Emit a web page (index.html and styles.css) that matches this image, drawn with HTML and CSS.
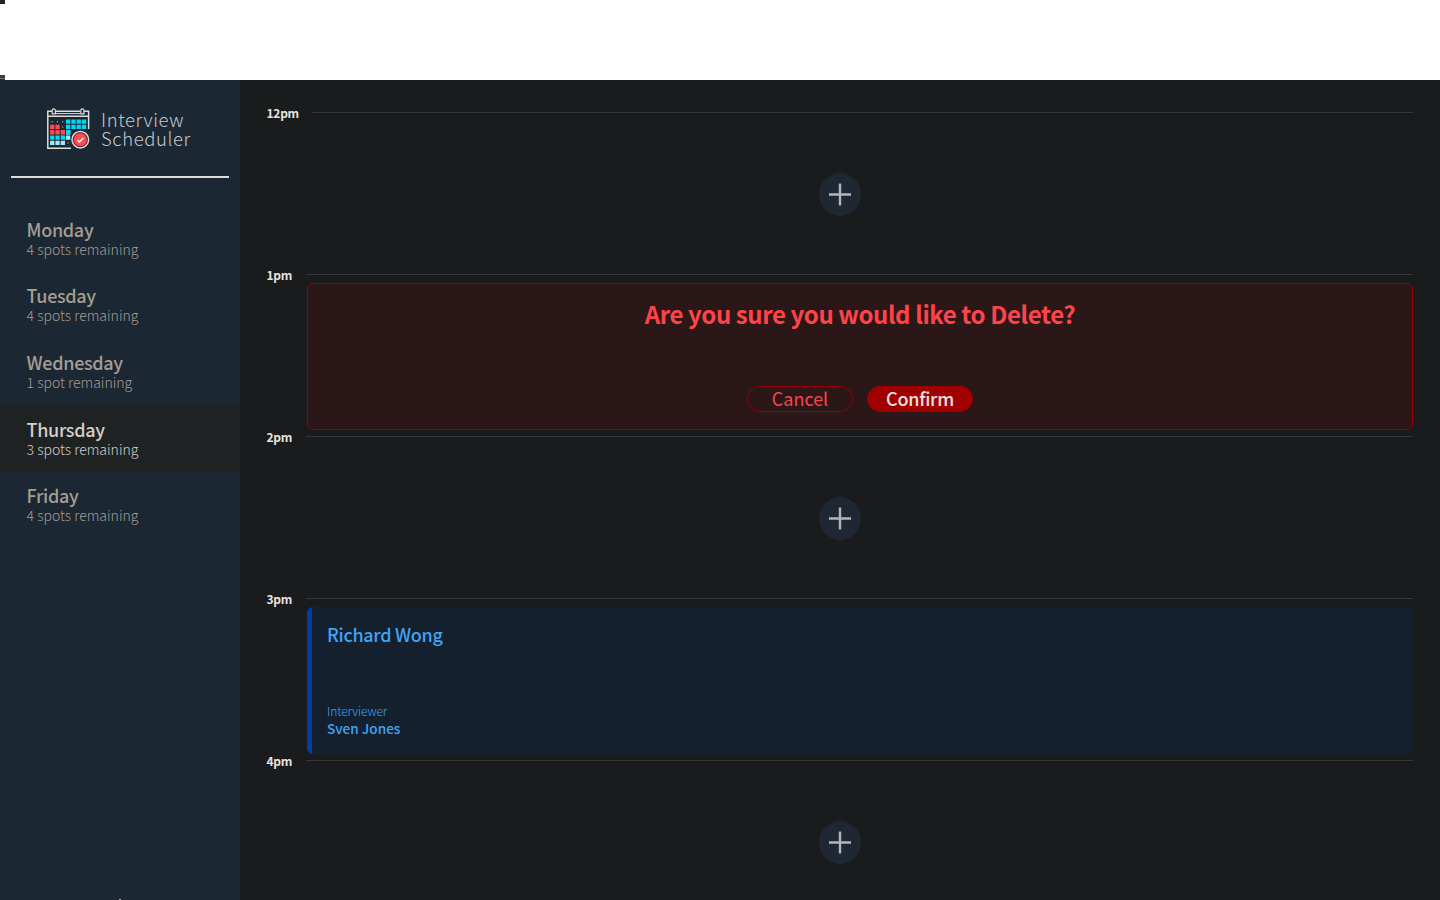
FILE: index.html
```html
<!DOCTYPE html>
<html lang="en">
<head>
<meta charset="utf-8">
<title>Interview Scheduler</title>
<link rel="stylesheet" href="styles.css">
</head>
<body>
<header class="topbar"><span class="tick"></span><span class="tick tick-low"></span></header>
<div class="layout">
  <aside class="sidebar">
    <div class="brand">
      <svg class="brand-icon" viewBox="0 0 44 42" width="44" height="42">
        <g fill="none" stroke="#deded9" stroke-width="1.5">
          <path d="M25 40.2H1.8V3.2H6M10 3.2H34M38 3.2H42.6V21"/>
          <path d="M10 5.6H34" stroke-width="1"/>
          <path d="M1.8 8.2H42.6" stroke-width="1.4"/>
          <path d="M6.2 5.8V2.5a1.6 1.6 0 0 1 3.2 0v3.3zM34.8 5.8V2.5a1.6 1.6 0 0 1 3.2 0v3.3z" stroke-width="1.2"/>
        </g>
        <g fill="#00d8f5">
          <path d="M20 11.5h4.3v4.3H20zM25.3 11.5h4.3v4.3h-4.3zM30.6 11.5h4.3v4.3h-4.3zM35.9 11.5h4.3v4.3h-4.3zM20 16.8h4.3v4.3H20zM25.3 16.8h4.3v4.3h-4.3zM30.6 16.8h4.3v4.3h-4.3zM35.9 16.8h4.3v4.3h-4.3zM20 22.1h4.3v4.3H20zM4.1 27.4h4.3v4.3H4.1zM9.4 27.4h4.3v4.3H9.4z"/>
        </g>
        <path fill="#00d8f5" d="M14.7 27.4H19v4.3h-4.3z"/>
        <path fill="#9cecfa" d="M20 27.4h4.3v4.3H20zM4.1 32.7h4.3V37H4.1zM9.4 32.7h4.3V37H9.4zM14.7 32.7H19V37h-4.3zM20 22.1h4.3v4.3H20z" />
        <path fill="#00d8f5" d="M20 22.1h4.3v4.3H20z"/>
        <path fill="#ff4b50" d="M4.1 16.8h4.3v4.3H4.1zM9.4 16.8h4.3v4.3H9.4zM4.1 22.1h4.3v4.3H4.1zM9.4 22.1h4.3v4.3H9.4zM14.7 22.1H19v4.3h-4.3z"/>
        <path fill="#deded9" d="M5.6 13.2h1v1h-1zM10.9 13.2h1v1h-1zM16.2 13.2h1v1h-1zM16.2 18.5h1v1h-1zM21.5 34.4h1v1h-1z"/>
        <circle cx="34.3" cy="31.7" r="9.6" fill="#1b2733"/>
        <circle cx="34.3" cy="31.7" r="8.3" fill="#ff4b50" stroke="#deded9" stroke-width="1.5"/>
        <circle cx="34.3" cy="31.7" r="7" fill="none" stroke="#39343d" stroke-width="1"/>
        <path d="M31.3 32l2.1 2 4-4" fill="none" stroke="#fff" stroke-width="1.5"/>
      </svg>
      <div class="brand-name"><span>Interview</span><span class="second">Scheduler</span></div>
    </div>
    <hr class="separator">
    <nav>
      <ul class="days">
        <li class="day"><h2>Monday</h2><p>4 spots remaining</p></li>
        <li class="day"><h2>Tuesday</h2><p>4 spots remaining</p></li>
        <li class="day"><h2>Wednesday</h2><p>1 spot remaining</p></li>
        <li class="day selected"><h2>Thursday</h2><p>3 spots remaining</p></li>
        <li class="day"><h2>Friday</h2><p>4 spots remaining</p></li>
      </ul>
    </nav>
    <span class="speck"></span>
  </aside>
  <main class="schedule">
    <article class="slot">
      <header class="hour noon"><h4>12pm</h4><hr></header>
      <div class="empty"><button class="add" aria-label="Add"><svg width="22" height="23" viewBox="0 0 22 23"><path d="M11 .5v22M0 11.5h22"/></svg></button></div>
    </article>
    <article class="slot">
      <header class="hour"><h4>1pm</h4><hr></header>
      <section class="card confirm">
        <h1>Are you sure you would like to Delete?</h1>
        <div class="actions"><button class="btn">Cancel</button><button class="btn solid">Confirm</button></div>
      </section>
    </article>
    <article class="slot">
      <header class="hour"><h4>2pm</h4><hr></header>
      <div class="empty"><button class="add" aria-label="Add"><svg width="22" height="23" viewBox="0 0 22 23"><path d="M11 .5v22M0 11.5h22"/></svg></button></div>
    </article>
    <article class="slot">
      <header class="hour"><h4>3pm</h4><hr></header>
      <section class="card show">
        <h2>Richard Wong</h2>
        <div><h5>Interviewer</h5><h3>Sven Jones</h3></div>
      </section>
    </article>
    <article class="slot">
      <header class="hour"><h4>4pm</h4><hr></header>
      <div class="empty"><button class="add" aria-label="Add"><svg width="22" height="23" viewBox="0 0 22 23"><path d="M11 .5v22M0 11.5h22"/></svg></button></div>
    </article>
  </main>
</div>
</body>
</html>
```
FILE: styles.css
```css
* { box-sizing: border-box; margin: 0; padding: 0; }
body {
  height: 900px;
  overflow: hidden;
  background: #fff;
  font-family: "Noto Sans CJK SC", "Noto Sans", sans-serif;
  white-space: nowrap;
}
.topbar { height: 80px; display: flex; flex-direction: column; justify-content: space-between; }
.tick { width: 5px; height: 4px; background: #232427; }
.tick-low { height: 5px; background: linear-gradient(#3c3d40 3px, #77756f 3px, #77756f 4px, #303038 4px); }
.layout { display: flex; height: 820px; }
.sidebar { width: 240px; background: #1b2733; flex: none; display: flex; flex-direction: column; }
.speck { width: 2px; height: 1px; margin: auto 0 0 119px; background: #b8bcc0; }
.brand { display: flex; padding: 28px 0 0 46px; height: 96px; }
.brand-icon { flex: none; }
.brand-name {
  display: flex; flex-direction: column;
  margin: 2px 0 0 11px;
  font-size: 18.5px; line-height: 19px; font-weight: 300; letter-spacing: 0.6px;
  color: #c5c8c8;
}
.separator { border: 0; height: 2px; background: #deded9; margin: 0 11px; }
.days { list-style: none; padding-top: 27px; }
.day { height: 66.7px; padding: 13.6px 0 0 26.6px; color: #a59d91; }
.day h2 { font-size: 18px; line-height: 20px; font-weight: 500; letter-spacing: -0.33px; }
.day p { font-size: 14px; line-height: 20px; font-weight: 300; }
.selected { background: #1f2223; color: #d4cec5; }
.schedule { flex: 1; background: #1a1b1d; padding: 26px 27px 0 26px; overflow: hidden; }
.slot { height: 162px; }
.hour { height: 15px; display: flex; align-items: center; }
.hour h4 { width: 40px; padding-left: 0.6px; font-size: 12px; line-height: 15px; margin-top: -2px; font-weight: 700; letter-spacing: -0.3px; color: #e4e4df; }
.hour hr { flex: 1; border: 0; height: 1px; background: #333738; margin-bottom: 2px; }
.noon h4 { width: 46px; }
.empty { height: 147px; display: flex; align-items: center; justify-content: center; }
.add {
  width: 42px; height: 43px; border: 0; border-radius: 50%; margin-left: 1px;
  background: #1e2732; display: flex; align-items: center; justify-content: center;
}
.add path { fill: none; stroke: #b4b5b8; stroke-width: 2.4; }
.card { height: 147px; margin-left: 41px; border-radius: 6px; display: flex; flex-direction: column; justify-content: space-between; }
.confirm { background: #2c1718; border: 1px solid #990002; align-items: center; padding: 15px 0 17px; }
.confirm h1 { font-size: 24px; line-height: 30px; font-weight: 700; letter-spacing: -0.4px; color: #ff4449; }
.actions { display: flex; gap: 14px; }
.btn {
  width: 106px; height: 26px; border: 1px solid #990002; border-radius: 13px; padding-bottom: 2px;
  background: none; color: #f8464b; font: 400 18px/22px "Noto Sans CJK SC", sans-serif;
}
.solid { background: #a10000; border-color: #a10000; color: #eee4e0; font-weight: 500; letter-spacing: -0.25px; }
.show { background: #15202f; border-left: 5px solid #003da5; padding: 14px 15px 17px; color: #3fa4f5; }
.show h2 { font-size: 18px; line-height: 26px; font-weight: 500; letter-spacing: -0.3px; }
.show h5 { font-size: 12px; line-height: 17px; font-weight: 300; letter-spacing: -0.1px; }
.show h3 { font-size: 13.6px; line-height: 18px; font-weight: 500; }
```
